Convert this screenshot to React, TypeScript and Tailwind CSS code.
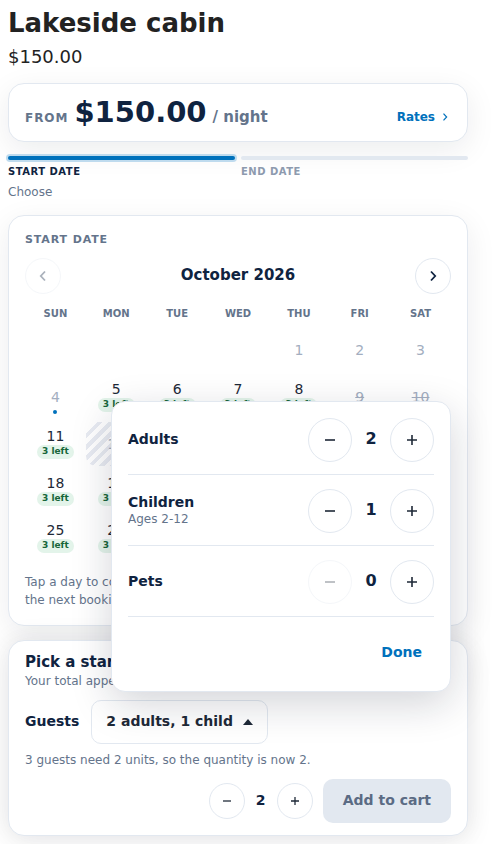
import { useState } from "react";

const WEEKDAYS = ["Sun", "Mon", "Tue", "Wed", "Thu", "Fri", "Sat"];
const CARD = "rounded-2xl border border-[#e2e8f0] bg-white";
const SOFT_SHADOW = "shadow-[0_8px_30px_rgba(15,23,42,0.08)]";
const RAISED_SHADOW = "shadow-[0_-2px_24px_rgba(15,23,42,0.08),0_8px_30px_rgba(15,23,42,0.06)]";

function Chevron({ back = false, size = 16, weight = 1.8 }: { back?: boolean; size?: number; weight?: number }) {
  return (
    <svg width={size} height={size} viewBox="0 0 16 16" fill="none" stroke="currentColor" strokeWidth={weight} aria-hidden="true">
      <path d={back ? "M10 3.5 5.8 8l4.2 4.5" : "M6 3.5l4.2 4.5L6 12.5"} />
    </svg>
  );
}

function RoundButton({
  kind,
  label,
  small = false,
  disabled = false,
  onClick,
}: {
  kind: "minus" | "plus";
  label: string;
  small?: boolean;
  disabled?: boolean;
  onClick: () => void;
}) {
  return (
    <button
      type="button"
      aria-label={label}
      disabled={disabled}
      onClick={onClick}
      className={`${small ? "size-9" : "size-11"} flex shrink-0 items-center justify-center rounded-full border border-[#e2e8f0] bg-white text-[#1e2937] disabled:opacity-35`}
    >
      <svg width={small ? 8 : 10} height={small ? 8 : 10} viewBox="0 0 10 10" fill="none" stroke="currentColor" strokeWidth="1.6" aria-hidden="true">
        <path d={kind === "minus" ? "M0 5h10" : "M0 5h10M5 0v10"} />
      </svg>
    </button>
  );
}

function Day({ day }: { day: number }) {
  const past = day < 4;
  const today = day === 4;
  const booked = day === 9 || day === 10;
  const turnover = day === 12;
  if (past || today || booked || turnover) {
    return (
      <button
        type="button"
        disabled
        className={`relative flex h-11 items-center justify-center rounded-[10px] text-sm text-[#a3aec0] ${booked ? "line-through" : ""} ${
          turnover
            ? "bg-[repeating-linear-gradient(135deg,#e8ebf2_0px,#e8ebf2_4px,transparent_4px,transparent_8px)]"
            : ""
        }`}
      >
        {day}
        {today && <span className="absolute bottom-[5px] size-1 rounded-full bg-[#0071bc]" />}
      </button>
    );
  }
  return (
    <button type="button" className="flex h-11 flex-col items-center pt-1.5 text-sm text-[#1e2937]">
      <span className="leading-4">{day}</span>
      <span className="mt-px h-3.5 rounded-full bg-[#e3f4ea] px-[5px] text-[9px] leading-[13px] font-bold text-[#17663a]">3 left</span>
    </button>
  );
}

function GuestRow({
  name,
  note,
  value,
  onChange,
}: {
  name: string;
  note?: string;
  value: number;
  onChange: (n: number) => void;
}) {
  return (
    <div className="flex items-center justify-between border-b border-[#e2e8f0] pt-3.5 pb-3">
      <div className="pb-0.5">
        <div className="text-sm leading-[18px] font-bold">{name}</div>
        {note && <div className="text-xs leading-4 text-[#64748b]">{note}</div>}
      </div>
      <div className="flex items-center">
        <RoundButton kind="minus" label={`Fewer ${name}`} disabled={value === 0} onClick={() => onChange(value - 1)} />
        <span className="w-[38px] pb-0.5 text-center text-base font-bold">{value}</span>
        <RoundButton kind="plus" label={`More ${name}`} onClick={() => onChange(value + 1)} />
      </div>
    </div>
  );
}

export default function App() {
  const [adults, setAdults] = useState(2);
  const [children, setChildren] = useState(1);
  const [pets, setPets] = useState(0);
  const [quantity, setQuantity] = useState(2);
  const [open, setOpen] = useState(true);

  return (
    <main className="max-w-[476px] p-2 font-['DejaVu_Sans',sans-serif] text-[#0f2340]">
      <h1 className="text-[26px] leading-[30px] font-bold text-[#222222]">Lakeside cabin</h1>
      <p className="mt-2 text-lg leading-[22px] text-[#222222]">$150.00</p>

      <section className={`${CARD} ${SOFT_SHADOW} mt-[15px] flex items-center justify-between px-4 py-2.5`}>
        <div className="flex items-baseline gap-1.5 font-bold text-[#64748b]">
          <span className="text-xs tracking-[0.08em]">FROM</span>
          <span className="text-[29px] leading-[37px] text-[#0f2340]">$150.00</span>
          <span className="text-[15px] leading-4">/ night</span>
        </div>
        <a href="#rates" className="mt-2 flex items-center gap-1 text-xs font-bold text-[#0071bc]">
          Rates
          <Chevron size={12} weight={1.6} />
        </a>
      </section>

      <ol className="mt-3.5 grid grid-cols-2 gap-1.5">
        <li>
          <div className="h-1 rounded-full bg-[#0071bc] shadow-[0_0_0_2px_#bfdbee]" />
          <div className="mt-1 text-[10px] leading-4 font-bold tracking-[0.05em]">START DATE</div>
          <div className="mt-1 text-xs leading-4 text-[#64748b]">Choose</div>
        </li>
        <li>
          <div className="h-1 rounded-full bg-[#e2e8f0]" />
          <div className="mt-1 text-[10px] leading-4 font-bold tracking-[0.05em] text-[#8d9aae]">END DATE</div>
        </li>
      </ol>

      <section className={`${CARD} ${SOFT_SHADOW} mt-[15px] p-4`}>
        <h2 className="text-[11px] leading-4 font-bold tracking-[0.08em] text-[#64748b]">START DATE</h2>
        <div className="mt-2.5 flex items-center justify-between">
          <button type="button" aria-label="Previous month" disabled className="flex size-9 items-center justify-center rounded-full border border-[#e2e8f0] disabled:opacity-35">
            <Chevron back />
          </button>
          <h3 className="pb-0.5 text-[15px] leading-5 font-bold">October 2026</h3>
          <button type="button" aria-label="Next month" className="flex size-9 items-center justify-center rounded-full border border-[#e2e8f0]">
            <Chevron />
          </button>
        </div>
        <div className="mt-3 grid grid-cols-7 text-center text-[10px] leading-4 font-bold text-[#64748b] uppercase">
          {WEEKDAYS.map((d) => (
            <span key={d}>{d}</span>
          ))}
        </div>
        <div className="mt-1.5 grid grid-cols-7 gap-y-[3px]">
          <span className="col-span-4" />
          {Array.from({ length: 31 }, (_, i) => (
            <Day key={i} day={i + 1} />
          ))}
        </div>
        <p className="mt-[13px] text-xs leading-[18px] text-[#64748b]">
          Tap a day to continue. Striped days are kept free before
          <br />
          the next booking.
        </p>
      </section>

      <section className={`${CARD} ${RAISED_SHADOW} mt-3.5 px-4 py-3`}>
        <h2 className="text-[15px] leading-[18px] font-bold">Pick a start date</h2>
        <p className="mt-0.5 text-xs leading-4 text-[#64748b]">Your total appears here.</p>

        <div className="relative mt-[11px] flex items-center gap-3">
          <label htmlFor="guests" className="pb-0.5 text-sm font-bold">Guests</label>
          <button
            id="guests"
            type="button"
            aria-expanded={open}
            onClick={() => setOpen(!open)}
            className="flex h-11 items-center gap-2.5 rounded-[10px] border border-[#e2e8f0] px-3.5 text-sm font-bold text-[#1e2937]"
          >
            <span className="pb-0.5">
              {adults} adults, {children} child
            </span>
            <svg width="10" height="6" viewBox="0 0 10 6" fill="currentColor" aria-hidden="true">
              <path d="M0 6 5 0l5 6z" />
            </svg>
          </button>

          {open && (
            <div
              role="dialog"
              aria-label="Guests"
              className="absolute right-0 bottom-full mb-2 w-[340px] rounded-[14px] border border-[#e2e8f0] bg-white px-4 pt-0.5 pb-[17px] shadow-[0_12px_40px_rgba(15,23,42,0.18)]"
            >
              <GuestRow name="Adults" value={adults} onChange={setAdults} />
              <GuestRow name="Children" note="Ages 2-12" value={children} onChange={setChildren} />
              <GuestRow name="Pets" value={pets} onChange={setPets} />
              <div className="mt-[13px] flex justify-end">
                <button type="button" onClick={() => setOpen(false)} className="h-11 px-3 text-sm font-bold text-[#0071bc]">
                  Done
                </button>
              </div>
            </div>
          )}
        </div>

        <p className="mt-2 text-xs leading-4 text-[#64748b]">3 guests need 2 units, so the quantity is now 2.</p>

        <div className="mt-[11px] flex items-center justify-end gap-2.5">
          <div className="flex items-center">
            <RoundButton small kind="minus" label="Fewer units" onClick={() => setQuantity(Math.max(1, quantity - 1))} />
            <span className="w-8 pb-0.5 text-center text-sm font-bold">{quantity}</span>
            <RoundButton small kind="plus" label="More units" onClick={() => setQuantity(quantity + 1)} />
          </div>
          <button type="button" disabled className="h-11 rounded-[10px] bg-[#e2e8f0] px-5 pb-0.5 text-sm font-bold text-[#5b6b84]">
            Add to cart
          </button>
        </div>
      </section>
    </main>
  );
}
